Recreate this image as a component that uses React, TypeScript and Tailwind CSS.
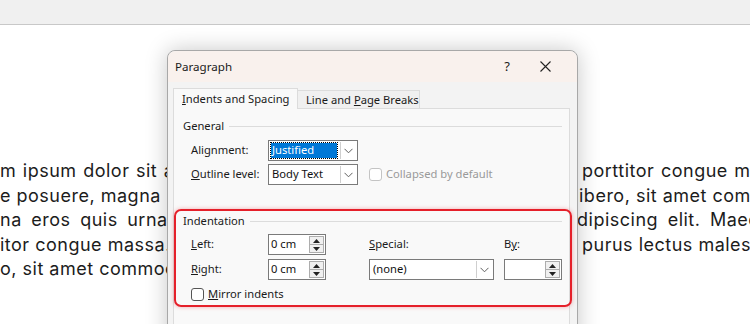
import React from 'react';

const ui = { fontFamily: '"Segoe UI", "Noto Sans", sans-serif' };
const doc = { fontFamily: 'Inter, "Open Sans", sans-serif' };

const lines = [
  { left: 'm ipsum dolor sit amet', right: 'porttitor congue massa', ws: '[word-spacing:1px]', rx: 'pl-[582px]' },
  { left: 'e posuere, magna sed', right: 'ibero, sit amet commodo', ws: '[word-spacing:0px]', rx: 'pl-[579px]' },
  { left: 'na eros quis urna. Nunc', right: 'dipiscing elit. Maecenas', ws: '[word-spacing:4px]', rx: 'pl-[577px]' },
  { left: 'itor congue massa. Fusce', right: 'purus lectus malesuada', ws: '[word-spacing:0px]', rx: 'pl-[582px]' },
  { left: 'o, sit amet commodo magna', right: '', ws: '[word-spacing:0px]', rx: 'pl-[582px]' },
];

function Chevron() {
  return (
    <svg width="9" height="6" viewBox="0 0 9 6" fill="none">
      <path d="M0.5 0.8 L4.5 4.8 L8.5 0.8" stroke="#606060" strokeWidth="1" />
    </svg>
  );
}

function Select({ value, width, selected }: { value: string; width: string; selected?: boolean }) {
  return (
    <div className={`flex h-[21px] ${width} items-stretch border border-[#7a7a7a] bg-white`}>
      <div className="flex flex-1 items-center px-[2px]">
        {selected ? (
          <span className="flex h-[15px] w-full items-center bg-[#0078d7] pl-[1px] text-white outline outline-1 outline-dotted outline-[#000]">
            {value}
          </span>
        ) : (
          <span className="pl-[1px] text-[#111]">{value}</span>
        )}
      </div>
      <div className="m-[1px] flex w-[16px] items-center justify-center border-l border-[#cfcfcf] bg-white">
        <Chevron />
      </div>
    </div>
  );
}

function Spin({ value }: { value: string }) {
  return (
    <div className="flex h-[21px] w-[58px] items-stretch border border-[#7a7a7a] bg-white">
      <div className="flex flex-1 items-center pl-[2px] text-[#111]">{value}</div>
      <div className="m-[1px] flex w-[15px] flex-col border border-[#adadad] bg-[#f0f0f0]">
        <div className="flex flex-1 items-center justify-center border-b border-[#adadad]">
          <svg width="7" height="4" viewBox="0 0 7 4"><path d="M0 4 L3.5 0 L7 4 Z" fill="#222" /></svg>
        </div>
        <div className="flex flex-1 items-center justify-center">
          <svg width="7" height="4" viewBox="0 0 7 4"><path d="M0 0 L3.5 4 L7 0 Z" fill="#222" /></svg>
        </div>
      </div>
    </div>
  );
}

function Legend({ text }: { text: string }) {
  return (
    <div className="flex h-[14px] items-center gap-[5px] pl-[9px] pr-[7px]">
      <span className="text-[#1a1a1a]">{text}</span>
      <div className="h-px flex-1 bg-[#dcdcdc]" />
    </div>
  );
}

function Check({ label, disabled }: { label: React.ReactNode; disabled?: boolean }) {
  return (
    <div className="flex items-center gap-[4px] whitespace-nowrap">
      <div
        className={`h-[13px] w-[13px] rounded-[3px] border bg-white ${disabled ? 'border-[#c4c4c4]' : 'border-[#555]'}`}
      />
      <span className={disabled ? 'text-[#9a9a9a]' : 'text-[#1a1a1a]'}>{label}</span>
    </div>
  );
}

export default function App() {
  return (
    <div className="relative h-[324px] w-[750px] overflow-hidden bg-white">
      <div className="h-[25px] border-b border-[#c8c8c8] bg-[#f0f0f0]" />

      <div className="pt-[134px] text-[18px] leading-[24.6px] tracking-[0.5px] text-[#1c1c1c]" style={doc}>
        {lines.map((l, i) => (
          <div key={i} className="relative h-[24.6px] whitespace-nowrap">
            <span className={`${l.ws}`}>{l.left}</span>
            <span className={`absolute left-0 top-0 ${l.rx} ${l.ws}`}>{l.right}</span>
          </div>
        ))}
      </div>

      {/* dialog overlay */}
      <div
        className="absolute left-[167px] top-[50px] h-[300px] w-[411px] whitespace-nowrap rounded-t-[8px] border border-[#a8a8a8] bg-[#f3f3f3] text-[11.2px] shadow-[0_0_22px_rgba(0,0,0,0.22)]"
        style={ui}
      >
        <div className="flex h-[31px] items-center rounded-t-[8px] bg-[#f9f1ed] pl-[7px] text-[11.6px] text-[#1a1a1a]">
          <span className="flex-1">Paragraph</span>
          <span className="w-[12px] text-center text-[13px]">?</span>
          <span className="flex w-[64px] items-center justify-center">
            <svg width="11" height="11" viewBox="0 0 11 11">
              <path d="M0.5 0.5 L10.5 10.5 M10.5 0.5 L0.5 10.5" stroke="#222" strokeWidth="1.1" />
            </svg>
          </span>
        </div>

        <div className="px-[5px] pt-[6px]">
          <div className="flex items-end">
            <div className="relative z-10 -mb-px flex h-[21px] w-[125px] items-center border border-b-0 border-[#dcdcdc] bg-[#f9f9f9] pl-[8px] pt-[1px] text-[#1a1a1a]">
              <span><u>I</u>ndents and Spacing</span>
            </div>
            <div className="flex h-[18px] w-[122px] items-center border border-l-0 border-b-0 border-[#dcdcdc] bg-[#f0f0f0] pl-[8px] pt-[1px] text-[#1a1a1a]">
              <span>Line and <u>P</u>age Breaks</span>
            </div>
          </div>

          <div className="relative h-[240px] w-[397px] border border-[#dcdcdc] bg-[#f9f9f9] pt-[10px]">
            <Legend text="General" />
            <div className="mt-[7px] grid grid-cols-[77px_90px_1fr] items-center gap-y-[3px] pl-[17px]">
              <span className="text-[#1a1a1a]">Ali<u>g</u>nment:</span>
              <Select value="Justified" width="w-[90px]" selected />
              <span />
              <span className="text-[#1a1a1a]"><u>O</u>utline level:</span>
              <Select value="Body Text" width="w-[90px]" />
              <div className="pl-[11px]">
                <Check label="Collapsed by default" disabled />
              </div>
            </div>

            <div className="mt-[29px]">
              <Legend text="Indentation" />
              <div className="mt-[6px] grid grid-cols-[77px_58px_43px_125px_10px_58px] grid-rows-[21px_21px] items-center gap-y-[4px] pl-[17px]">
                <span className="text-[#1a1a1a]"><u>L</u>eft:</span>
                <Spin value="0 cm" />
                <span />
                <span className="text-[#1a1a1a]"><u>S</u>pecial:</span>
                <span />
                <span className="text-[#1a1a1a]">B<u>y</u>:</span>
                <span className="text-[#1a1a1a]"><u>R</u>ight:</span>
                <Spin value="0 cm" />
                <span />
                <Select value="(none)" width="w-[125px]" />
                <span />
                <Spin value="" />
              </div>
              <div className="mt-[6px] pl-[17px]">
                <Check label={<><u>M</u>irror indents</>} />
              </div>
            </div>

            {/* red highlight annotation */}
            <div className="pointer-events-none absolute left-[0px] top-[100px] h-[98px] w-[398px] rounded-[7px] border-2 border-[#e5202a] shadow-[0_0_4px_rgba(229,32,42,0.35)]" />
          </div>
        </div>
      </div>
    </div>
  );
}
